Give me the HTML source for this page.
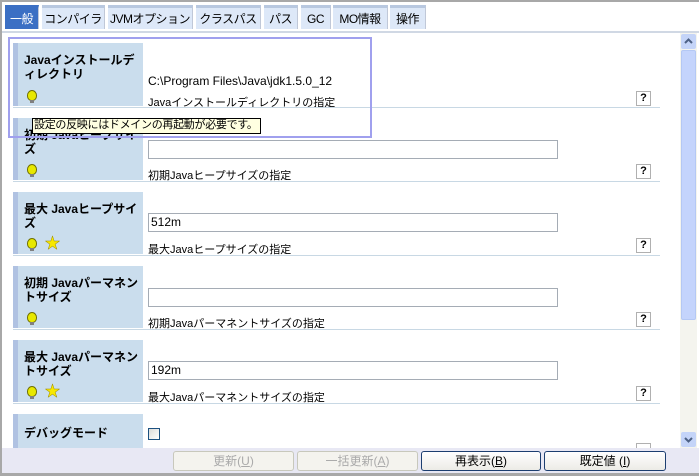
<html><head><style>
body{margin:0;width:699px;height:476px;position:relative;overflow:hidden;background:#fff;font-family:"Liberation Sans","Noto Sans CJK JP",sans-serif;font-size:12px;}
.a{position:absolute;}
.tab{position:absolute;top:5px;height:24px;background:#dde8f8;border-top:3px solid #b8c8e0;border-right:1px solid #c0c8d8;font-size:12px;line-height:22px;text-align:center;color:#000;box-sizing:border-box;white-space:nowrap;overflow:hidden;letter-spacing:-0.5px;}
.lab{position:absolute;left:13px;width:130px;background:#cadded;border-left:5px solid #b0c2e2;box-sizing:border-box;font-weight:bold;font-size:12px;padding:10px 0 0 6px;line-height:14px;}
.inp{position:absolute;left:148px;width:410px;height:19px;border:1px solid #a5acb5;box-sizing:border-box;font-size:12px;line-height:17px;padding-left:2px;}
.desc{position:absolute;left:148px;font-size:11px;white-space:nowrap;}
.help{position:absolute;left:636px;width:15px;height:15px;border:1px solid #b0b0b0;box-sizing:border-box;font-weight:bold;font-size:11px;text-align:center;line-height:13px;}
.sep{position:absolute;left:13px;width:647px;height:1px;background:#c8d8e4;}
.bulb{position:absolute;width:8px;height:9px;border-radius:50% 50% 45% 45%;background:#e8e800;border:1px solid #707000;}
.bulb:after{content:"";position:absolute;left:2px;top:9px;width:4px;height:3px;background:#808080;}
.star{position:absolute;color:#f8e800;font-size:15px;line-height:15px;-webkit-text-stroke:0.5px #a09000;}
.btn{position:absolute;top:451px;height:20px;border:1px solid #c8c8bc;border-radius:3px;background:#f4f3ee;color:#aaa;text-align:center;line-height:19px;font-size:12px;box-sizing:border-box;}
.btn.on{border-color:#1c3e70;color:#000;background:linear-gradient(#fff,#ecebe6);}
</style></head><body>
<div class="a" style="left:0;top:0;width:699px;height:2px;background:#a8a8a8"></div>
<div class="a" style="left:0;top:0;width:2px;height:476px;background:#a8a8a8"></div>
<div class="a" style="left:0;top:473px;width:699px;height:3px;background:#a8a8a8"></div>
<div class="tab" style="left:5px;width:34px;background:#3b6fc4;color:#fff;border-top-color:#3b6fc4">一般</div>
<div class="tab" style="left:42px;width:63px">コンパイラ</div>
<div class="tab" style="left:108px;width:85px">JVMオプション</div>
<div class="tab" style="left:196px;width:65px">クラスパス</div>
<div class="tab" style="left:264px;width:34px">パス</div>
<div class="tab" style="left:301px;width:30px">GC</div>
<div class="tab" style="left:333px;width:55px">MO情報</div>
<div class="tab" style="left:390px;width:36px">操作</div>
<div class="a" style="left:2px;top:31px;width:697px;height:2px;background:#d0d8e4"></div>

<div class="lab" style="top:43px;height:63px">Javaインストールディレクトリ</div>
<div class="bulb" style="left:27px;top:90px"></div>
<div class="desc" style="top:74px;font-size:12px">C:\Program Files\Java\jdk1.5.0_12</div>
<div class="desc" style="top:94px">Javaインストールディレクトリの指定</div>
<div class="help" style="top:91px">?</div>
<div class="sep" style="top:107px"></div>

<div class="lab" style="top:118px;height:62px">初期 Javaヒープサイズ</div>
<div class="bulb" style="left:27px;top:164px"></div>
<div class="inp" style="top:140px"></div>
<div class="desc" style="top:167px">初期Javaヒープサイズの指定</div>
<div class="help" style="top:164px">?</div>
<div class="sep" style="top:181px"></div>

<div class="lab" style="top:192px;height:62px">最大 Javaヒープサイズ</div>
<div class="bulb" style="left:27px;top:238px"></div><div class="star" style="left:45px;top:236px">★</div>
<div class="inp" style="top:213px">512m</div>
<div class="desc" style="top:241px">最大Javaヒープサイズの指定</div>
<div class="help" style="top:238px">?</div>
<div class="sep" style="top:255px"></div>

<div class="lab" style="top:266px;height:62px">初期 Javaパーマネントサイズ</div>
<div class="bulb" style="left:27px;top:312px"></div>
<div class="inp" style="top:288px"></div>
<div class="desc" style="top:315px">初期Javaパーマネントサイズの指定</div>
<div class="help" style="top:312px">?</div>
<div class="sep" style="top:329px"></div>

<div class="lab" style="top:340px;height:62px">最大 Javaパーマネントサイズ</div>
<div class="bulb" style="left:27px;top:386px"></div><div class="star" style="left:45px;top:384px">★</div>
<div class="inp" style="top:361px">192m</div>
<div class="desc" style="top:389px">最大Javaパーマネントサイズの指定</div>
<div class="help" style="top:386px">?</div>
<div class="sep" style="top:403px"></div>

<div class="lab" style="top:414px;height:40px;padding-top:12px">デバッグモード</div>
<div class="a" style="left:148px;top:428px;width:12px;height:12px;border:1px solid #1c5180;box-sizing:border-box;background:linear-gradient(135deg,#dcdcd8,#fff)"></div>
<div class="help" style="top:443px;height:6px"></div>

<div class="a" style="left:8px;top:37px;width:360px;height:97px;border:2px solid #a0a0ee"></div>
<div class="a" style="left:32px;top:118px;height:14px;background:#ffffe1;border:1px solid #000;font-size:11px;line-height:13px;padding:0 2px 0 1px;white-space:nowrap;letter-spacing:-0.3px">設定の反映にはドメインの再起動が必要です。</div>

<div class="a" style="left:680px;top:33px;width:17px;height:415px;background:#f4f4ee"></div>
<div class="a" style="left:681px;top:34px;width:15px;height:15px;background:#c4d4f8;border-radius:2px"><svg width="15" height="15"><path d="M4 9 L7.5 5.5 L11 9" fill="none" stroke="#4d6185" stroke-width="2"/></svg></div>
<div class="a" style="left:681px;top:50px;width:15px;height:270px;background:#c4d4fc;border:1px solid #b4c8f4;box-sizing:border-box;border-radius:2px"></div>
<div class="a" style="left:681px;top:432px;width:15px;height:15px;background:#c4d4f8;border-radius:2px"><svg width="15" height="15"><path d="M4 6 L7.5 9.5 L11 6" fill="none" stroke="#4d6185" stroke-width="2"/></svg></div>

<div class="a" style="left:2px;top:448px;width:697px;height:25px;background:#e8e8f4"></div>
<div class="btn" style="left:173px;width:121px">更新(<u>U</u>)</div>
<div class="btn" style="left:297px;width:121px">一括更新(<u>A</u>)</div>
<div class="btn on" style="left:421px;width:120px">再表示(<u>B</u>)</div>
<div class="btn on" style="left:544px;width:122px">既定値 (<u>I</u>)</div>
</body></html>
